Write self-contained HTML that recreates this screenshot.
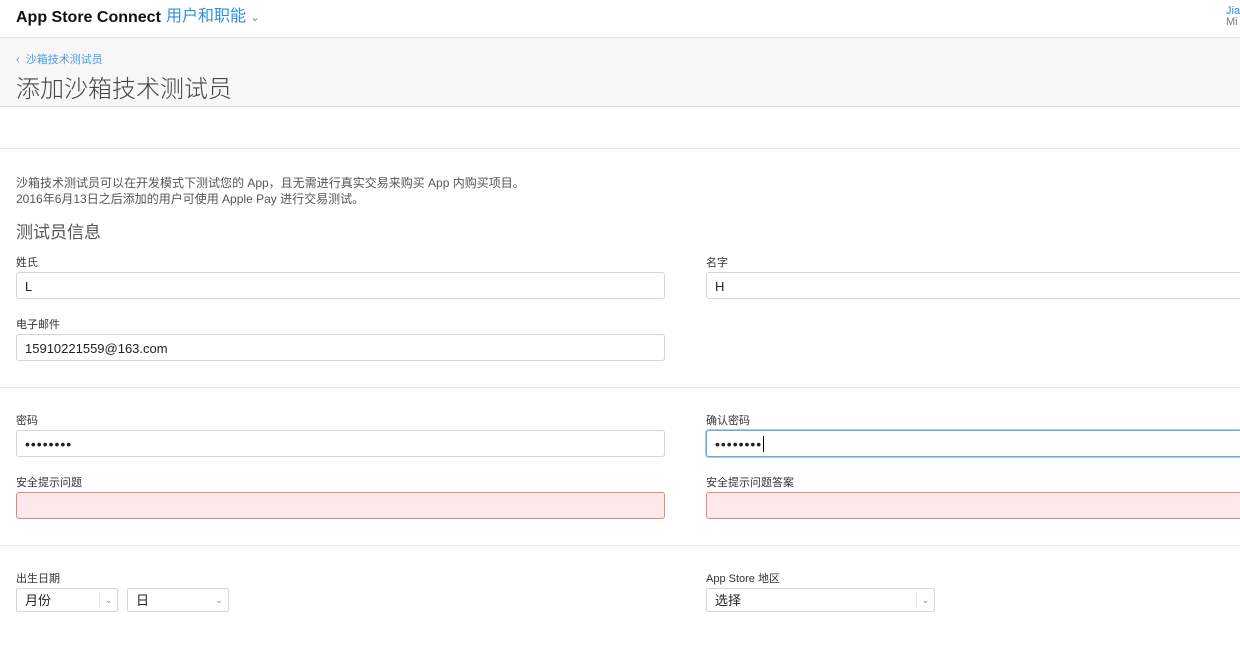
<!DOCTYPE html>
<html><head><meta charset="utf-8"><style>
*{margin:0;padding:0;box-sizing:border-box}
body{width:1240px;height:663px;overflow:hidden;background:#fff;font-family:"Liberation Sans","Noto Sans CJK SC",sans-serif;color:#333;position:relative}
.a{position:absolute;white-space:nowrap}
.lbl{font-size:11px;color:#333}
.inp{position:absolute;height:27px;border:1px solid #d6d6d6;border-radius:3px;background:#fff;font-size:13px;padding-left:8px;line-height:27px;color:#222}
.err{background:#fde9e9;border-color:#e48585}
.sel{position:absolute;height:24px;border:1px solid #d6d6d6;border-radius:2px;font-size:13px;padding-left:8px;line-height:24px;color:#222}
.sel .c{position:absolute;right:0;top:3px;height:16px;width:18px;border-left:1px solid #e3e3e3;font-size:9px;color:#888;text-align:center;line-height:16px}
.hr{position:absolute;left:0;width:1240px;height:1px;background:#e5e5e5}
.dots{letter-spacing:1px;font-size:14px}
</style></head><body>
<div class="a" style="left:16px;top:9px;font-size:16px;font-weight:bold;color:#111;line-height:18px">App Store Connect</div>
<div class="a" style="left:166px;top:7px;font-size:16px;color:#2e8fe0;line-height:20px">用户和职能 <span style="font-size:11px">⌄</span></div>
<div class="a" style="left:1226px;top:6px;font-size:11px;color:#2e8fe0;line-height:11px">Jia<br><span style="color:#777">Mi</span></div>
<div class="hr" style="top:37px"></div>
<div style="position:absolute;left:0;top:38px;width:1240px;height:69px;background:#f7f7f7;border-bottom:1px solid #e0e0e0"></div>
<div class="a" style="left:16px;top:51px;font-size:11px;color:#4a9be6">‹&nbsp; 沙箱技术测试员</div>
<div class="a" style="left:16px;top:69px;font-size:24px;color:#444;font-weight:300">添加沙箱技术测试员</div>
<div class="hr" style="top:148px"></div>
<div class="a" style="left:16px;top:175px;font-size:12px;color:#555;line-height:16px">沙箱技术测试员可以在开发模式下测试您的 App，且无需进行真实交易来购买 App 内购买项目。<br>2016年6月13日之后添加的用户可使用 Apple Pay 进行交易测试。</div>
<div class="a" style="left:16px;top:218px;font-size:17px;color:#555">测试员信息</div>
<div class="a lbl" style="left:16px;top:254px">姓氏</div>
<div class="inp" style="left:16px;top:272px;width:649px">L</div>
<div class="a lbl" style="left:706px;top:254px">名字</div>
<div class="inp" style="left:706px;top:272px;width:560px">H</div>
<div class="a lbl" style="left:16px;top:316px">电子邮件</div>
<div class="inp" style="left:16px;top:334px;width:649px">15910221559@163.com</div>
<div class="hr" style="top:387px"></div>
<div class="a lbl" style="left:16px;top:412px">密码</div>
<div class="inp dots" style="left:16px;top:430px;width:649px">••••••••</div>
<div class="a lbl" style="left:706px;top:412px">确认密码</div>
<div class="inp dots" style="left:706px;top:430px;width:560px;border:1px solid #6ea7e0;box-shadow:0 0 0 1px #a9cdf2">••••••••<span style="border-left:1px solid #000;margin-left:1px"></span></div>
<div class="a lbl" style="left:16px;top:474px">安全提示问题</div>
<div class="inp err" style="left:16px;top:492px;width:649px"></div>
<div class="a lbl" style="left:706px;top:474px">安全提示问题答案</div>
<div class="inp err" style="left:706px;top:492px;width:560px"></div>
<div class="hr" style="top:545px"></div>
<div class="a lbl" style="left:16px;top:570px">出生日期</div>
<div class="sel" style="left:16px;top:588px;width:102px">月份<span class="c">⌄</span></div>
<div class="sel" style="left:127px;top:588px;width:102px">日<span class="c" style="border:none">⌄</span></div>
<div class="a lbl" style="left:706px;top:570px">App Store 地区</div>
<div class="sel" style="left:706px;top:588px;width:229px">选择<span class="c">⌄</span></div>
</body></html>
